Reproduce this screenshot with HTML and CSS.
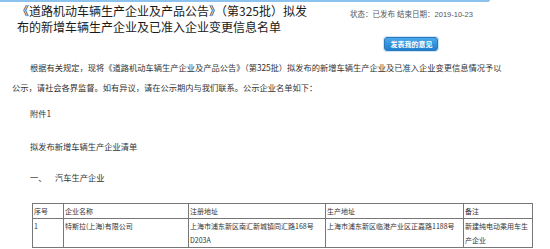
FILE: index.html
```html
<!DOCTYPE html>
<html lang="zh-CN">
<head>
<meta charset="utf-8">
<title>公示</title>
<link rel="stylesheet" href="styles.css">
</head>
<body>
<div class="topbar"></div>
<header class="head">
  <h1 class="title">《道路机动车辆生产企业及产品公告》（第325批）拟发布的新增车辆生产企业及已准入企业变更信息名单</h1>
  <div class="meta">
    <div class="status">状态：已发布 结束日期：2019-10-23</div>
    <button class="btn">发表我的意见</button>
  </div>
</header>
<main class="content">
  <p class="para">根据有关规定，现将《道路机动车辆生产企业及产品公告》（第325批）拟发布的新增车辆生产企业及已准入企业变更信息情况予以公示，请社会各界监督。如有异议，请在公示期内与我们联系。公示企业名单如下：</p>
  <p class="ind att">附件1</p>
  <p class="ind list">拟发布新增车辆生产企业清单</p>
  <p class="ind sec"><span class="num">一、</span>汽车生产企业</p>
  <table class="tbl">
    <colgroup>
      <col class="c1"><col class="c2"><col class="c3"><col class="c4"><col class="c5">
    </colgroup>
    <tr><td>序号</td><td>企业名称</td><td>注册地址</td><td>生产地址</td><td>备注</td></tr>
    <tr><td>1</td><td>特斯拉(上海)有限公司</td><td>上海市浦东新区南汇新城镇同汇路168号D203A</td><td>上海市浦东新区临港产业区正嘉路1188号</td><td>新建纯电动乘用车生产企业</td></tr>
  </table>
</main>
</body>
</html>
```
FILE: styles.css
```css
html, body {
  margin: 0;
  padding: 0;
  background: #fff;
}
body {
  font-family: "Liberation Sans", "Noto Sans CJK SC", sans-serif;
  color: #333;
  width: 550px;
  overflow: hidden;
}
.topbar {
  width: 490px;
  height: 2px;
  background: #8cc3ee;
  border-bottom-right-radius: 3px;
}
.head {
  display: flex;
  align-items: flex-start;
}
.title {
  margin: 1px 0 0 17px;
  width: 296px;
  flex: none;
  font-size: 12px;
  line-height: 15.5px;
  font-weight: normal;
  color: #1a1a1a;
  font-family: "Noto Sans CJK SC", sans-serif;
}
.meta {
  margin-left: 37px;
  display: flex;
  flex-direction: column;
  align-items: center;
  padding-top: 8px;
}
.status {
  font-size: 7.5px;
  line-height: 10px;
  color: #555;
  font-family: "Liberation Sans", "Noto Sans CJK SC", sans-serif;
  white-space: nowrap;
}
.btn {
  margin-top: 17px;
  height: 14px;
  padding: 0 5px;
  font-size: 7px;
  line-height: 12px;
  font-weight: bold;
  color: #fff;
  font-family: "Noto Sans CJK SC", sans-serif;
  background: linear-gradient(#4aa8ea, #1f7fd0);
  border: 1px solid #2a78bd;
  border-radius: 3px;
  box-shadow: 0 0 0 1px #cfe4f5;
}
.content {
  padding: 0 45px 0 12px;
  font-family: "Noto Sans CJK SC", sans-serif;
  font-size: 8.25px;
  line-height: 20px;
  color: #333;
}
.content p {
  margin: 0;
}
.para {
  margin-top: 6px !important;
  text-indent: 18px;
}
.ind {
  padding-left: 18px;
}
.att { margin-top: 6px !important; }
.list { margin-top: 13px !important; }
.sec { margin-top: 11px !important; }
.num {
  display: inline-block;
  width: 25px;
}
.tbl {
  margin: 16px 0 0 20px;
  border-collapse: collapse;
  table-layout: fixed;
  width: 500px;
  font-size: 7px;
  line-height: 14px;
  color: #333;
  border: 1px solid #666;
}
.tbl td {
  border: 1px solid #777;
  padding: 0 1px;
  vertical-align: top;
}
.c1 { width: 31px; }
.c2 { width: 125px; }
.c3 { width: 137px; }
.c4 { width: 138px; }
.c5 { width: 69px; }
```
